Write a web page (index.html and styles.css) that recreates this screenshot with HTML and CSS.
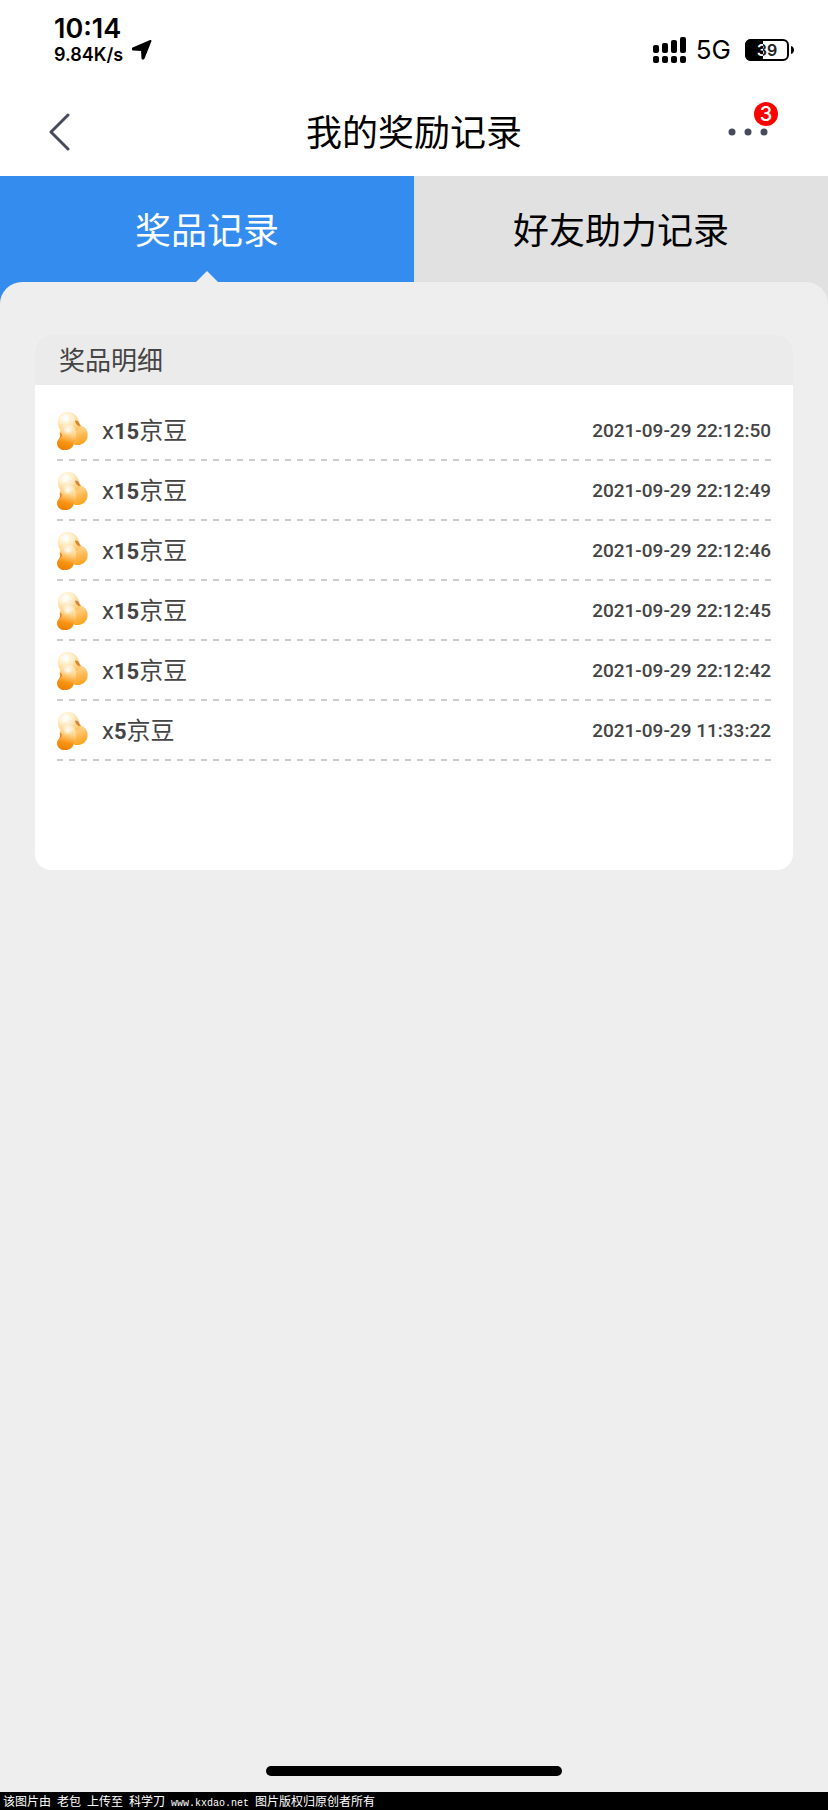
FILE: index.html
```html
<!DOCTYPE html>
<html lang="zh-CN">
<head>
  <meta charset="UTF-8">
  <meta name="viewport" content="width=device-width, initial-scale=1">
  <title>我的奖励记录</title>
  <link rel="stylesheet" href="styles.css">
</head>
<body>

  <!-- shared bean icon -->
  <svg class="sprite" width="0" height="0" aria-hidden="true">
    <defs>
      <radialGradient id="beanTop" cx="0.35" cy="0.3" r="0.8">
        <stop offset="0" stop-color="#fffdf5"/>
        <stop offset="0.4" stop-color="#ffeec8"/>
        <stop offset="1" stop-color="#ffbf5c"/>
      </radialGradient>
      <linearGradient id="beanSide" x1="0.2" y1="0" x2="0.5" y2="1">
        <stop offset="0" stop-color="#ffdfa8"/>
        <stop offset="0.6" stop-color="#ffb850"/>
        <stop offset="1" stop-color="#f9a51c"/>
      </linearGradient>
      <linearGradient id="beanFront" x1="0.6" y1="0" x2="0.4" y2="1">
        <stop offset="0" stop-color="#ffefcd"/>
        <stop offset="0.35" stop-color="#ffd488"/>
        <stop offset="0.7" stop-color="#f79414"/>
        <stop offset="1" stop-color="#ee8000"/>
      </linearGradient>
      <radialGradient id="beanShine">
        <stop offset="0" stop-color="#fff"/>
        <stop offset="1" stop-color="#fff" stop-opacity="0"/>
      </radialGradient>
    </defs>
    <symbol id="bean" viewBox="0 0 31 38">
      <path fill="url(#beanSide)" d="M19 14C25 12 29 15 30.500 21C31.500 28 27 33 20 33C15 33 13 29 14 24Z"/>
      <path fill="url(#beanTop)" d="M11 0C17 0 20 4 21.500 8C22 11 24 12 23.500 14C22 20 12 21 6 19C2 18 1 14 1 10C1 4 5 0 11 0Z"/>
      <path fill="#d98535" d="M18 8.500C18.500 12 21 14.500 24 14C22.500 12 21.500 11 21 9Z"/>
      <path fill="url(#beanFront)" d="M11 13C16 13 19 17 19 22C19 27 17.500 31 16 34C14 37.500 10 38.500 6 38C2 37.500 0 34 0 31C0 28 3 26.500 3 24C2.500 22 2.500 20.500 3 18.500C4 15 7 13 11 13Z"/>
      <path fill="#dc7c1e" d="M3 20.500C5.500 21.500 5.500 25 2.500 26.500C3.500 24.500 3.500 23 3 20.500Z"/>
      <circle cx="8" cy="6.500" r="5" fill="url(#beanShine)"/>
      <circle cx="11" cy="18" r="5" fill="url(#beanShine)"/>
    </symbol>
  </svg>

  <div class="status-bar">
    <div class="status-left">
      <div class="status-text">
        <span class="time">10:14</span>
        <span class="speed">9.84K/s</span>
      </div>
      <svg class="location" width="22" height="22" viewBox="0 0 22 22" aria-hidden="true">
        <path d="M2 9.500L19.500 2L12.500 19.500L11.500 19.500L11 11L2 10.500Z" stroke="#000" stroke-width="2" stroke-linejoin="round"/>
      </svg>
    </div>
    <div class="status-right">
      <svg class="signal" width="33" height="26" viewBox="0 0 33 26" aria-hidden="true">
        <rect x="0" y="8" width="6" height="8" rx="2"/>
        <rect x="9" y="6" width="6" height="10" rx="2"/>
        <rect x="18" y="3" width="6" height="13" rx="2"/>
        <rect x="27" y="0" width="6" height="16" rx="2"/>
        <rect x="0" y="19" width="6" height="7" rx="2"/>
        <rect x="9" y="19" width="6" height="7" rx="2"/>
        <rect x="18" y="19" width="6" height="7" rx="2"/>
        <rect x="27" y="19" width="6" height="7" rx="2"/>
      </svg>
      <span class="network">5G</span>
      <svg class="battery" width="49" height="22" viewBox="0 0 49 22" role="img" aria-label="39%">
        <defs>
          <linearGradient id="level" gradientUnits="userSpaceOnUse" x1="0" y1="0" x2="44" y2="0">
            <stop offset="0.410" stop-color="#fff"/>
            <stop offset="0.410" stop-color="#222"/>
          </linearGradient>
        </defs>
        <path d="M6 0H18V22H6A6 6 0 0 1 0 16V6A6 6 0 0 1 6 0Z"/>
        <rect x="1" y="1" width="42" height="20" rx="5" fill="none" stroke="#000" stroke-width="2"/>
        <path d="M46 7C50 8 50 14 46 15Z"/>
        <text class="battery-text" x="22" y="17" text-anchor="middle" fill="url(#level)">39</text>
      </svg>
    </div>
  </div>

  <header class="navbar">
    <button class="nav-btn back" type="button" aria-label="返回">
      <svg width="22" height="38" viewBox="0 0 22 38" aria-hidden="true">
        <path d="M20 2L3 19L20 36" fill="none" stroke="#464b59" stroke-width="3" stroke-linecap="round" stroke-linejoin="round"/>
      </svg>
    </button>
    <h1>我的奖励记录</h1>
    <button class="nav-btn more" type="button" aria-label="更多">
      <svg width="40" height="8" viewBox="0 0 40 8" fill="#464b59" aria-hidden="true">
        <circle cx="4" cy="4" r="3.500"/>
        <circle cx="20" cy="4" r="3.500"/>
        <circle cx="36" cy="4" r="3.500"/>
      </svg>
      <span class="badge">3</span>
    </button>
  </header>

  <nav class="tabs">
    <a class="tab active" href="#prizes">奖品记录</a>
    <a class="tab" href="#friends">好友助力记录</a>
  </nav>

  <div class="page">
    <main class="content" id="prizes">
      <section class="card">
        <h2>奖品明细</h2>
        <ul class="records">
          <li>
            <svg class="bean" width="31" height="38" aria-hidden="true"><use href="#bean"/></svg>
            <span class="prize">x<b>15</b>京豆</span>
            <time>2021-09-29 22:12:50</time>
          </li>
          <li>
            <svg class="bean" width="31" height="38" aria-hidden="true"><use href="#bean"/></svg>
            <span class="prize">x<b>15</b>京豆</span>
            <time>2021-09-29 22:12:49</time>
          </li>
          <li>
            <svg class="bean" width="31" height="38" aria-hidden="true"><use href="#bean"/></svg>
            <span class="prize">x<b>15</b>京豆</span>
            <time>2021-09-29 22:12:46</time>
          </li>
          <li>
            <svg class="bean" width="31" height="38" aria-hidden="true"><use href="#bean"/></svg>
            <span class="prize">x<b>15</b>京豆</span>
            <time>2021-09-29 22:12:45</time>
          </li>
          <li>
            <svg class="bean" width="31" height="38" aria-hidden="true"><use href="#bean"/></svg>
            <span class="prize">x<b>15</b>京豆</span>
            <time>2021-09-29 22:12:42</time>
          </li>
          <li>
            <svg class="bean" width="31" height="38" aria-hidden="true"><use href="#bean"/></svg>
            <span class="prize">x<b>5</b>京豆</span>
            <time>2021-09-29 11:33:22</time>
          </li>
        </ul>
      </section>
      <div class="home-indicator"></div>
    </main>
  </div>

  <footer>
    <span>该图片由</span>
    <span>老包</span>
    <span>上传至</span>
    <span>科学刀</span>
    <span class="site">www.kxdao.net</span>
    <span>图片版权归原创者所有</span>
  </footer>

</body>
</html>
```
FILE: styles.css
```css
* {
  box-sizing: border-box;
}
body {
  font-family: "Noto Sans CJK SC", sans-serif;
  margin: 0;
  min-height: 100vh;
  display: flex;
  flex-direction: column;
  background-color: #fff;
  color: #000;
}
h1, h2, ul {
  margin: 0;
  padding: 0;
  font-weight: 400;
}
.sprite {
  position: absolute;
}

/* status bar */
.status-bar {
  height: 88px;
  padding: 14px 34px 0 54px;
  display: flex;
  justify-content: space-between;
  align-items: flex-start;
  font-family: Inter, sans-serif;
}
.status-left {
  display: flex;
  align-items: flex-end;
  gap: 8px;
}
.status-text {
  display: flex;
  flex-direction: column;
  font-weight: 600;
}
.time {
  font-size: 27px;
  line-height: 30px;
}
.speed {
  font-size: 18px;
  line-height: 22px;
}
.location {
  margin-bottom: 5px;
}
.status-right {
  display: flex;
  align-items: center;
  padding-top: 21px;
}
.network {
  margin: 0 14px 0 10px;
  font-size: 26px;
  line-height: 30px;
}
.battery-text {
  font-size: 16px;
  font-weight: 600;
}

/* title bar */
.navbar {
  height: 88px;
  padding: 0 48px;
  display: flex;
  justify-content: space-between;
  align-items: center;
}
.navbar h1 {
  padding-bottom: 4px;
  font-size: 36px;
  line-height: 48px;
}
.nav-btn {
  width: 52px;
  height: 52px;
  padding: 0;
  border: none;
  background: none;
  display: flex;
  align-items: center;
  cursor: pointer;
}
.more {
  position: relative;
  justify-content: flex-end;
  padding-right: 12px;
}
.badge {
  position: absolute;
  top: -4px;
  right: 2px;
  width: 24px;
  height: 24px;
  border-radius: 50%;
  background-color: #ff0000;
  color: #fff;
  font: 500 20px/24px Inter, sans-serif;
  text-align: center;
}

/* tabs */
.tabs {
  display: flex;
}
.tab {
  flex: 1;
  position: relative;
  padding-bottom: 2px;
  font-size: 36px;
  line-height: 104px;
  text-align: center;
  text-decoration: none;
  color: #000;
  background-color: #e1e1e1;
}
.tab.active {
  color: #fff;
  background-color: #338cee;
}
.tab.active::after {
  content: "";
  position: absolute;
  left: 50%;
  bottom: 0;
  margin-left: -11px;
  border: 11px solid transparent;
  border-top: none;
  border-bottom-color: #eee;
}

/* records */
.page {
  flex: 1;
  display: flex;
  background: linear-gradient(90deg, #338cee 50%, #e1e1e1 50%);
}
.content {
  flex: 1;
  display: flex;
  flex-direction: column;
  padding: 53px 35px 16px;
  background-color: #eee;
  border-radius: 22px 22px 0 0;
}
.card {
  background-color: #fff;
  border-radius: 16px;
  overflow: hidden;
}
.card h2 {
  padding: 0 0 2px 24px;
  font-size: 26px;
  line-height: 48px;
  color: #444;
  background-color: #ebebeb;
}
.records {
  list-style: none;
  padding: 16px 22px 109px;
}
.records li {
  height: 60px;
  display: flex;
  align-items: center;
  color: #444;
  background: repeating-linear-gradient(90deg, #ccc 0 6px, transparent 6px 12px) left bottom / 100% 2px no-repeat;
}
.prize {
  margin-left: 14px;
  font-family: Roboto, "Noto Sans CJK SC", sans-serif;
  font-size: 24px;
  line-height: 36px;
}
.prize b {
  font-size: 22px;
}
.records time {
  margin-left: auto;
  font-family: Roboto, sans-serif;
  font-size: 19px;
  font-weight: 500;
  line-height: 24px;
}
.home-indicator {
  width: 39%;
  height: 10px;
  margin: auto auto 0;
  border-radius: 5px;
  background-color: #000;
}

footer {
  display: flex;
  align-items: baseline;
  gap: 6px;
  padding-left: 3px;
  background-color: #000;
  color: #fff;
  font-size: 12px;
  line-height: 18px;
}
.site {
  font-family: "Liberation Mono", monospace;
  font-size: 10px;
  line-height: 12px;
}
```
